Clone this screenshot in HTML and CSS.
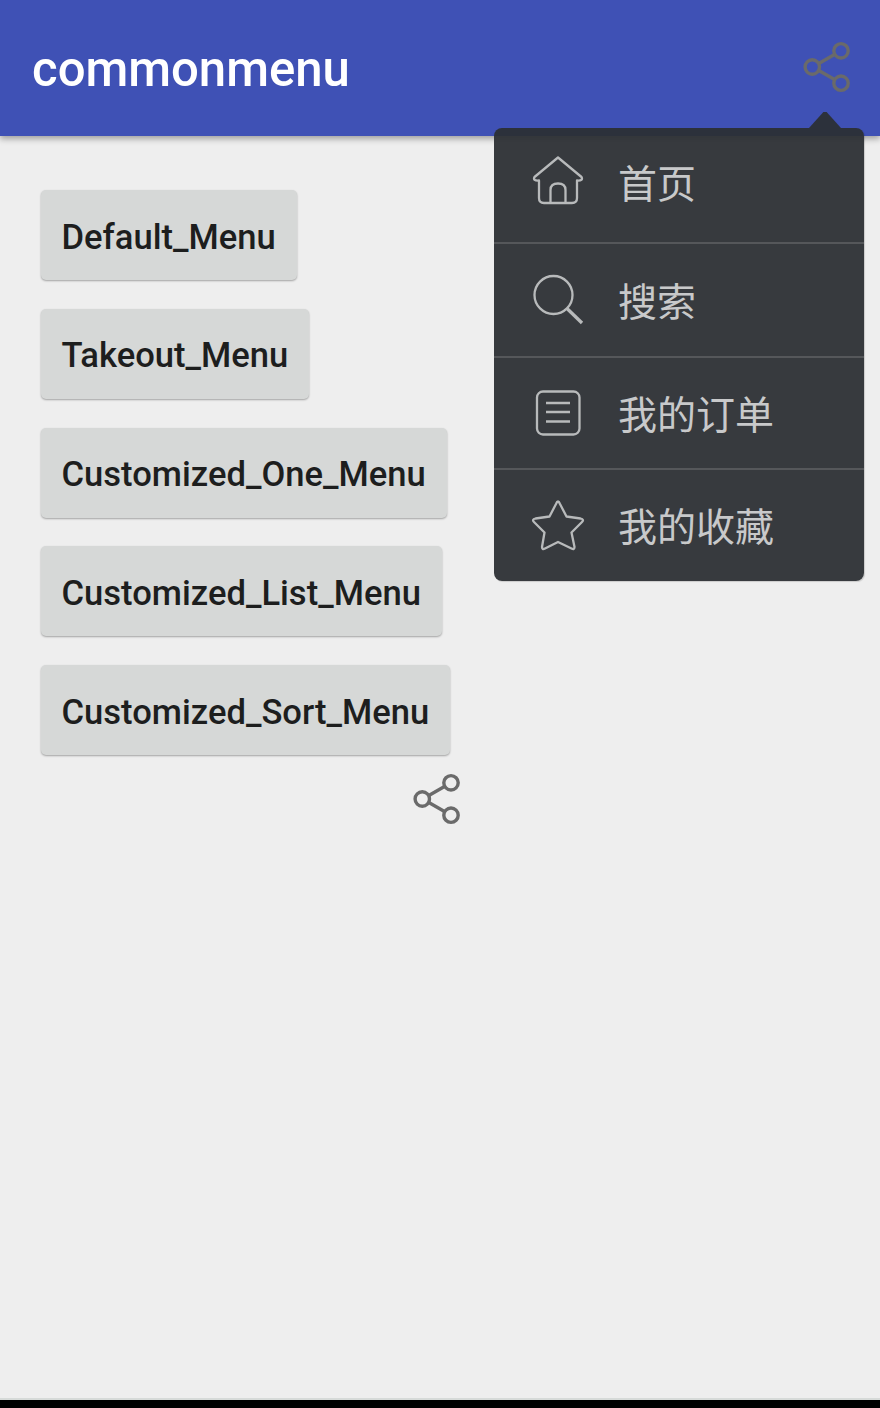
FILE: index.html
```html
<!DOCTYPE html>
<html lang="zh-CN">
<head>
<meta charset="utf-8">
<title>commonmenu</title>
<link rel="stylesheet" href="styles.css">
</head>
<body>
<div class="screen">
  <header class="toolbar">
    <h1 class="title">commonmenu</h1>
    <svg class="share share-toolbar" viewBox="0 0 48 52"><g fill="none" stroke="currentColor" stroke-width="3.4"><circle cx="9.3" cy="26" r="7.2"/><circle cx="38" cy="9.8" r="7.2"/><circle cx="38" cy="42.2" r="7.2"/><path d="M15.8 22.4 31.5 13.5M15.8 29.6 31.5 38.5"/></g></svg>
  </header>
  <main class="content">
    <button class="btn">Default_Menu</button>
    <button class="btn">Takeout_Menu</button>
    <button class="btn">Customized_One_Menu</button>
    <button class="btn">Customized_List_Menu</button>
    <button class="btn">Customized_Sort_Menu</button>
    <svg class="share share-content" viewBox="0 0 48 52"><g fill="none" stroke="currentColor" stroke-width="3.4"><circle cx="9.3" cy="26" r="7.2"/><circle cx="38" cy="9.8" r="7.2"/><circle cx="38" cy="42.2" r="7.2"/><path d="M15.8 22.4 31.5 13.5M15.8 29.6 31.5 38.5"/></g></svg>
  </main>
  <footer class="navbar"></footer>
  <nav class="popup">
    <ul class="menu">
      <li class="item"><svg class="icon" viewBox="0 0 54 54"><path d="M27 2.500 3.500 22Q1.500 26 8 25.500V43Q8 48 13 48H41Q46 48 46 43V25.500Q52.500 26 50.500 22Z"/><path d="M19.500 48V35Q19.500 28.500 27 28.500T34.500 35V48"/></svg><span class="label">首页</span></li>
      <li class="item"><svg class="icon" viewBox="0 0 54 54"><circle cx="22.500" cy="22" r="19"/><path class="thick" d="M36 35.500 51 50"/></svg><span class="label">搜索</span></li>
      <li class="item"><svg class="icon" viewBox="0 0 54 54"><rect x="6" y="5.500" width="42.500" height="43" rx="6"/><path d="M15 17H39M15 26H39M15 35.500H39"/></svg><span class="label">我的订单</span></li>
      <li class="item"><svg class="icon" viewBox="0 0 54 54"><path d="M27 2.500Q28 2.500 29 5L35.500 17.500 49.500 19.500Q53.500 20.500 51 23L40.500 33.500 43.500 48Q43.500 51 40.500 49.500L27 43 14 49.500Q11 51 11 48L13.500 33.500 3 23Q.500 20.500 4.500 19.500L18.500 17.500 25 5Q26 2.500 27 2.500Z"/></svg><span class="label">我的收藏</span></li>
    </ul>
  </nav>
</div>
</body>
</html>
```
FILE: styles.css
```css
* { box-sizing: border-box; }
body { margin: 0; background: #eee; font-family: Roboto, sans-serif; }
.screen { position: relative; display: flex; flex-direction: column; height: 1408px; }
.toolbar {
  display: flex; align-items: center; justify-content: space-between;
  height: 136px; padding: 0 29px 0 32px;
  background: #3f51b5; color: #fff;
  box-shadow: 0 3px 6px rgba(0, 0, 0, .32);
}
.title { margin: 1px 0 0; font-size: 49.100px; font-weight: 500; line-height: 58px; }
.share { display: block; width: 48px; height: 52px; color: #6a6a6a; }
.share-toolbar { margin-bottom: 2px; }
.content { flex: 1; display: flex; flex-direction: column; align-items: flex-start; gap: 28.750px; padding: 54px 0 0 41px; }
.btn {
  height: 90px; padding: 3px 21px 0 20.500px; border: 0; border-radius: 5px;
  background: #d6d8d7; color: #1d1e1e;
  font: 500 34.600px/40px Roboto, sans-serif;
  box-shadow: 0 1px 2px rgba(0, 0, 0, .32);
}
.share-content { margin: -11px 0 0 372px; }
.navbar { height: 10px; border-top: 2px solid #d6dad8; background: #000; }
.popup { position: absolute; top: 112px; left: 494px; width: 370px; }
.popup::before {
  content: ""; display: block; width: 32px; height: 16px; margin-left: 315px;
  background: rgba(44, 47, 51, .943); clip-path: polygon(45% 0, 55% 0, 100% 100%, 0 100%);
}
.menu {
  margin: 0; padding: 0; list-style: none; overflow: hidden;
  border-radius: 8px; background: rgba(44, 47, 51, .943);
  box-shadow: 1px 1px 1px rgba(0, 0, 0, .15);
}
.item { display: flex; align-items: center; height: 112px; padding-left: 37px; gap: 33px; color: #c8c9ca; }
.item:first-child { height: 116px; padding-bottom: 6px; }
.item:nth-child(2) { height: 114px; }
.item:last-child { height: 111px; }
.item:not(:last-child) { border-bottom: 2px solid #55575a; }
.icon { width: 54px; height: 54px; fill: none; stroke: #b8babb; stroke-width: 2.300; stroke-linejoin: round; }
.thick { stroke-width: 3.300; }
.label { padding-bottom: 3px; font: 400 39px/56px "Noto Sans CJK SC", sans-serif; }
```
